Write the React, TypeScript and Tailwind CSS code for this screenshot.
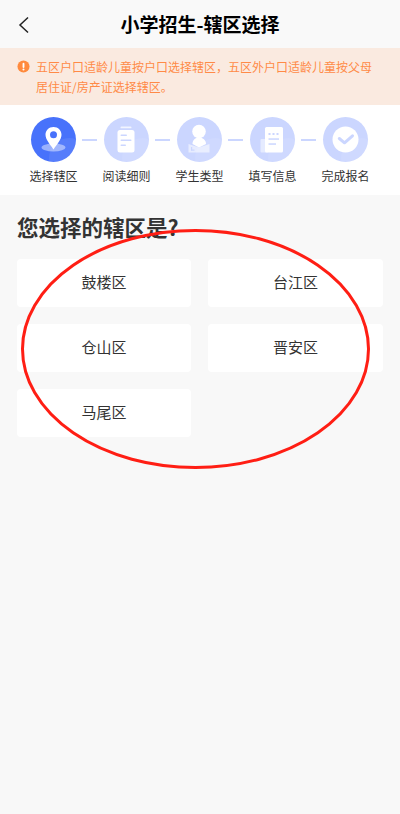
const districts = ["鼓楼区", "台江区", "仓山区", "晋安区", "马尾区"];

function Blob() {
  return <circle cx="38" cy="41" r="20" fill="#fff" fillOpacity="0.08" />;
}

function PinIcon() {
  return (
    <svg viewBox="0 0 45 45" className="w-[45px] h-[45px]">
      <Blob />
      <ellipse cx="22.500" cy="30.500" rx="12" ry="4" fill="#fff" fillOpacity="0.45" />
      <path d="M22.500 10c-4.700 0-8 3.500-8 7.800 0 5 4.800 9.700 8 14.700 3.200-5 8-9.700 8-14.700 0-4.300-3.300-7.800-8-7.800z" fill="#fff" />
      <circle cx="22.500" cy="17.800" r="3.500" fill="#4872fb" />
    </svg>
  );
}

function DocIcon() {
  return (
    <svg viewBox="0 0 45 45" className="w-[45px] h-[45px]">
      <Blob />
      <rect x="16.500" y="9.500" width="11" height="1.800" rx="0.900" fill="#fff" fillOpacity="0.75" />
      <rect x="13.500" y="13" width="17" height="22.500" rx="2.500" fill="#fff" />
      <rect x="16.500" y="17.500" width="6.500" height="1.500" rx="0.750" fill="#cbd6ff" />
      <rect x="16.500" y="22.500" width="11" height="1.500" rx="0.750" fill="#cbd6ff" />
      <rect x="16.500" y="27.500" width="5.500" height="1.500" rx="0.750" fill="#cbd6ff" />
    </svg>
  );
}

function StudentIcon() {
  return (
    <svg viewBox="0 0 45 45" className="w-[45px] h-[45px]">
      <Blob />
      <circle cx="22" cy="14.500" r="6.800" fill="#fff" />
      <path d="M15.500 27c0-4 2.800-6.500 6.500-6.500S29 23 29 27l-7 3.500z" fill="#fff" />
      <path d="M11.500 27L22 30.500 32.500 27v8.500h-21z" fill="#fff" fillOpacity="0.55" />
      <rect x="14" y="30" width="1.200" height="3.500" fill="#cbd6ff" />
      <rect x="14" y="32.500" width="3.500" height="1.200" fill="#cbd6ff" />
    </svg>
  );
}

function FormIcon() {
  return (
    <svg viewBox="0 0 45 45" className="w-[45px] h-[45px]">
      <Blob />
      <rect x="10.500" y="22" width="8" height="13.500" rx="1" fill="#fff" fillOpacity="0.5" />
      <rect x="15" y="10" width="18" height="25.500" rx="1.500" fill="#fff" />
      <rect x="18.500" y="16" width="2" height="2" fill="#cbd6ff" />
      <rect x="22.500" y="16" width="2" height="2" fill="#cbd6ff" />
      <rect x="26.500" y="16" width="2" height="2" fill="#cbd6ff" />
      <rect x="18.500" y="21.300" width="10.500" height="1.500" fill="#cbd6ff" />
      <rect x="18.500" y="26.300" width="7.500" height="1.500" fill="#cbd6ff" />
    </svg>
  );
}

function CheckIcon() {
  return (
    <svg viewBox="0 0 45 45" className="w-[45px] h-[45px]">
      <Blob />
      <circle cx="22.500" cy="22.500" r="13" fill="#fff" />
      <path d="M16.300 21.500l5.200 4.300 8-7" fill="none" stroke="#cbd6ff" strokeWidth="3" strokeLinecap="round" strokeLinejoin="round" />
    </svg>
  );
}

const steps = [
  { label: "选择辖区", icon: <PinIcon />, active: true },
  { label: "阅读细则", icon: <DocIcon />, active: false },
  { label: "学生类型", icon: <StudentIcon />, active: false },
  { label: "填写信息", icon: <FormIcon />, active: false },
  { label: "完成报名", icon: <CheckIcon />, active: false },
];

export default function App() {
  return (
    <div className="relative w-[400px] h-[814px] overflow-hidden bg-[#f8f8f8] font-['Noto_Sans_CJK_SC','Noto_Sans',sans-serif]">
      {/* header */}
      <div className="relative h-[48px] flex items-center justify-center bg-[#f9f9f9]">
        <svg viewBox="0 0 12 18" className="absolute left-[18px] top-[16px] w-[12px] h-[18px]">
          <path d="M10 1.500 2 9l8 7.500" fill="none" stroke="#222" strokeWidth="1.500" />
        </svg>
        <h1 className="text-[19px] leading-[26px] font-bold text-black">小学招生-辖区选择</h1>
      </div>

      {/* notice */}
      <div className="h-[57px] bg-[#faeae0] pl-[17px] pr-[20px] pt-[9px] flex items-start gap-[6px]">
        <svg viewBox="0 0 14 14" className="w-[13px] h-[13px] mt-[3px] shrink-0">
          <circle cx="7" cy="7" r="6.500" fill="#ff8a3d" />
          <rect x="6" y="3" width="2" height="5.500" rx="1" fill="#fff" />
          <circle cx="7" cy="10.300" r="1.100" fill="#fff" />
        </svg>
        <p className="text-[12px] leading-[19.5px] text-[#ff8a47] w-[340px]">
          五区户口适龄儿童按户口选择辖区，五区外户口适龄儿童按父母居住证/房产证选择辖区。
        </p>
      </div>

      {/* steps */}
      <div className="h-[90px] bg-white flex gap-[28px] pl-[31px] pt-[12px]">
        {steps.map((s, i) => (
          <div key={s.label} className="relative w-[45px] flex flex-col items-center">
            <div className={`w-[45px] h-[45px] rounded-full overflow-hidden flex items-center justify-center ${s.active ? "bg-[#4872fb]" : "bg-[#cbd6ff]"}`}>
              {s.icon}
            </div>
            <span className="mt-[5px] text-[12px] leading-[18px] whitespace-nowrap text-[#333]">{s.label}</span>
            {i < 4 && <div className="absolute left-[51px] top-[22px] w-[15px] h-[2px] bg-[#cbd6ff]" />}
          </div>
        ))}
      </div>

      {/* districts */}
      <div className="px-[17px] pt-[17px]">
        <h2 className="text-[21.5px] leading-[30px] font-bold text-[#333]">您选择的辖区是?</h2>
        <div className="mt-[17px] grid grid-cols-[174px_175px] gap-[17px]">
          {districts.map((d) => (
            <div key={d} className="h-[48px] pb-[2px] bg-white rounded-[4px] flex items-center justify-center text-[15px] text-[#333]">
              {d}
            </div>
          ))}
        </div>
      </div>

      {/* hand drawn annotation */}
      <svg viewBox="0 0 400 814" className="absolute inset-0 w-[400px] h-[814px] pointer-events-none">
        <ellipse cx="195.500" cy="349" rx="173" ry="118.500" fill="none" stroke="#ff1e14" strokeWidth="3" />
      </svg>
    </div>
  );
}
